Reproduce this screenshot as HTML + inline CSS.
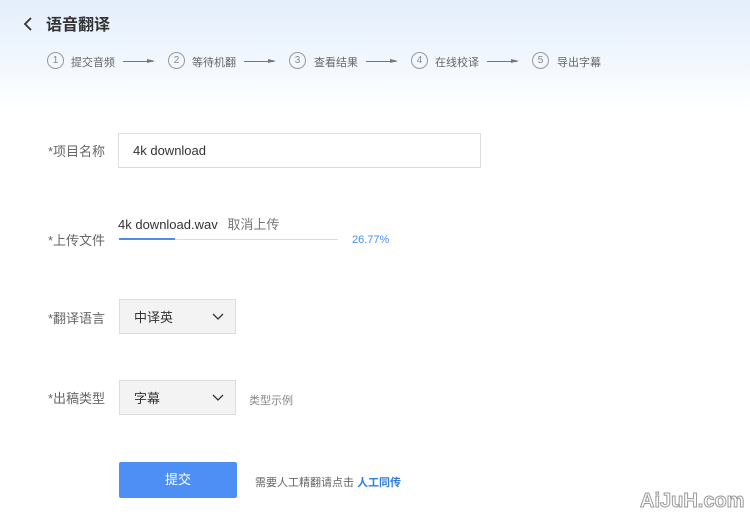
<!DOCTYPE html>
<html><head><meta charset="utf-8"><style>
body{margin:0;width:750px;height:518px;overflow:hidden;background:#fff;font-family:"Liberation Sans","Noto Sans CJK SC",sans-serif;position:relative}
.hdr{position:absolute;left:0;top:0;width:750px;height:110px;background:linear-gradient(180deg,#e3eefc 0%,#f3f8fe 60%,#fff 100%)}
.a{position:absolute;white-space:nowrap}
.step{font-size:11px;color:#666;}
.circ{position:absolute;width:15px;height:15px;border:1px solid #999;border-radius:50%;font-size:10px;color:#888;text-align:center;line-height:15px}
.arr{position:absolute;width:30px;height:1px;background:#777}
.arr:after{content:"";position:absolute;right:-2px;top:-2px;border-left:8px solid #777;border-top:2px solid transparent;border-bottom:2px solid transparent}
.lbl{font-size:13px;color:#666}
.sel{position:absolute;background:#f3f3f3;border:1px solid #ddd;width:117px;height:35px;box-sizing:border-box}
.sel span{position:absolute;left:14px;top:7px;font-size:13px;color:#333}
.sel svg{position:absolute;left:92px;top:13px}
</style></head><body>
<div class="hdr"></div>
<svg class="a" style="left:22px;top:16px" width="12" height="16"><path d="M9 2 L3 8 L9 14" fill="none" stroke="#333" stroke-width="1.8"/></svg>
<div class="a" style="left:46px;top:11px;font-size:16px;font-weight:bold;color:#333">语音翻译</div>

<div class="circ" style="left:47px;top:52px">1</div><div class="a step" style="left:71px;top:54px">提交音频</div><div class="arr" style="left:123px;top:61px"></div>
<div class="circ" style="left:168px;top:52px">2</div><div class="a step" style="left:192px;top:54px">等待机翻</div><div class="arr" style="left:244px;top:61px"></div>
<div class="circ" style="left:289px;top:52px">3</div><div class="a step" style="left:314px;top:54px">查看结果</div><div class="arr" style="left:366px;top:61px"></div>
<div class="circ" style="left:411px;top:52px">4</div><div class="a step" style="left:435px;top:54px">在线校译</div><div class="arr" style="left:487px;top:61px"></div>
<div class="circ" style="left:532px;top:52px">5</div><div class="a step" style="left:557px;top:54px">导出字幕</div>

<div class="a lbl" style="left:48px;top:141px">*项目名称</div>
<div class="a" style="left:118px;top:133px;width:363px;height:35px;border:1px solid #ddd;box-sizing:border-box"><span class="a" style="left:14px;top:9px;font-size:13px;color:#333">4k download</span></div>

<div class="a" style="left:118px;top:214px;font-size:13px;color:#333">4k download.wav <span style="color:#777;margin-left:6px">取消上传</span></div>
<div class="a lbl" style="left:48px;top:230px">*上传文件</div>
<div class="a" style="left:119px;top:239px;width:219px;height:1px;background:#ddd"></div>
<div class="a" style="left:119px;top:238px;width:56px;height:2px;background:#4a8ef0"></div>
<div class="a" style="left:352px;top:234px;font-size:11px;color:#4a8ef0">26.77%</div>

<div class="a lbl" style="left:48px;top:308px">*翻译语言</div>
<div class="sel" style="left:119px;top:299px"><span>中译英</span><svg width="12" height="8"><path d="M1 1 L6 6 L11 1" fill="none" stroke="#333" stroke-width="1.3"/></svg></div>

<div class="a lbl" style="left:48px;top:388px">*出稿类型</div>
<div class="sel" style="left:119px;top:380px"><span>字幕</span><svg width="12" height="8"><path d="M1 1 L6 6 L11 1" fill="none" stroke="#333" stroke-width="1.3"/></svg></div>
<div class="a" style="left:249px;top:392px;font-size:11px;color:#888">类型示例</div>

<div class="a" style="left:119px;top:462px;width:118px;height:36px;background:#4d8ff5;border-radius:2px;color:#fff;font-size:13px;text-align:center;line-height:36px">提交</div>
<div class="a" style="left:255px;top:474px;font-size:11px;color:#666">需要人工精翻请点击 <b style="color:#2f7de1">人工同传</b></div>
<div class="a" style="left:640px;top:490px;font-size:20px;color:#fff;-webkit-text-stroke:1px #999;font-weight:bold">AiJuH.com</div>
</body></html>
